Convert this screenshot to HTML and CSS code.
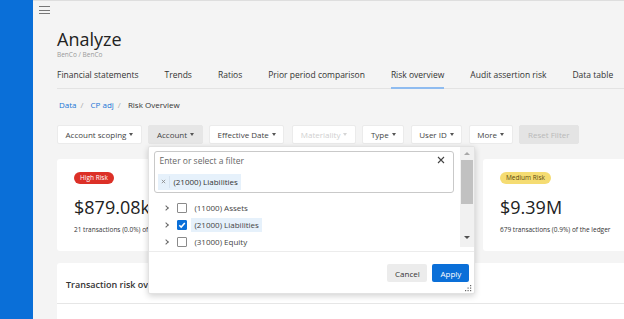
FILE: index.html
```html
<!DOCTYPE html>
<html lang="en">
<head>
    <meta charset="UTF-8">
    <meta name="viewport" content="width=device-width, initial-scale=1.0">
    <title>Analyze - Risk overview</title>
    <link rel="stylesheet" href="styles.css">
</head>
<body>

    <!-- App side rail -->
    <aside class="sidebar"></aside>

    <div class="main">
        <div class="topbar">
            <span class="hamburger"><i></i><i></i><i></i></span>
        </div>

        <div class="content">
            <h1 class="page-title">Analyze</h1>
            <div class="page-sub">BenCo / BenCo</div>

            <!-- Tabs -->
            <nav class="tabs">
                <a class="tab">Financial statements</a>
                <a class="tab">Trends</a>
                <a class="tab">Ratios</a>
                <a class="tab">Prior period comparison</a>
                <a class="tab active">Risk overview</a>
                <a class="tab">Audit assertion risk</a>
                <a class="tab">Data table</a>
            </nav>

            <div class="crumbs">
                <a class="crumb-link">Data</a><span class="crumb-sep">/</span>
                <a class="crumb-link">CP adj</a><span class="crumb-sep">/</span>
                <span class="crumb-current">Risk Overview</span>
            </div>

            <!-- Filter bar -->
            <div class="filters">
                <button class="filter">Account scoping <span class="caret"></span></button>
                <div class="filter-wrap">
                    <button class="filter open">Account <span class="caret"></span></button>

                    <!-- Account dropdown -->
                    <div class="dropdown">
                        <div class="dd-body">
                            <div class="dd-scroll">
                                <div class="dd-input">
                                    <div class="dd-input-row">
                                        <span class="dd-placeholder">Enter or select a filter</span>
                                        <svg class="dd-clear" viewBox="0 0 8 8" width="8" height="8"><path d="M1 1 L7 7 M7 1 L1 7" stroke="#444" stroke-width="1.1"/></svg>
                                    </div>
                                    <span class="chip">
                                        <span class="chip-x"><svg viewBox="0 0 6 6" width="5" height="5"><path d="M1 1 L5 5 M5 1 L1 5" stroke="#888" stroke-width="1"/></svg></span>
                                        <span class="chip-label">(21000) Liabilities</span>
                                    </span>
                                </div>
                                <ul class="tree">
                                    <li class="tree-row">
                                        <span class="chevron"></span>
                                        <span class="check"></span>
                                        <span class="tree-label">(11000) Assets</span>
                                    </li>
                                    <li class="tree-row">
                                        <span class="chevron"></span>
                                        <span class="check checked">
                                            <svg viewBox="0 0 10 10" width="10" height="10"><path d="M2.3 5.2 L4.2 7.1 L7.8 2.9" fill="none" stroke="#fff" stroke-width="1.5"/></svg>
                                        </span>
                                        <span class="tree-label selected">(21000) Liabilities</span>
                                    </li>
                                    <li class="tree-row">
                                        <span class="chevron"></span>
                                        <span class="check"></span>
                                        <span class="tree-label">(31000) Equity</span>
                                    </li>
                                </ul>
                            </div>
                            <div class="scrollbar">
                                <span class="sb-up"></span>
                                <span class="sb-thumb"></span>
                                <span class="sb-down"></span>
                            </div>
                        </div>
                        <div class="dd-footer">
                            <button class="btn btn-cancel">Cancel</button>
                            <button class="btn btn-apply">Apply</button>
                            <svg class="grip" viewBox="0 0 9 9" width="9" height="9">
                                <rect x="7" y="1" width="1.2" height="1.2"/>
                                <rect x="4.5" y="3.5" width="1.2" height="1.2"/>
                                <rect x="7" y="3.5" width="1.2" height="1.2"/>
                                <rect x="2" y="6" width="1.2" height="1.2"/>
                                <rect x="4.5" y="6" width="1.2" height="1.2"/>
                                <rect x="7" y="6" width="1.2" height="1.2"/>
                            </svg>
                        </div>
                    </div>
                </div>
                <button class="filter">Effective Date <span class="caret"></span></button>
                <button class="filter disabled">Materiality <span class="caret"></span></button>
                <button class="filter">Type <span class="caret"></span></button>
                <button class="filter">User ID <span class="caret"></span></button>
                <button class="filter">More <span class="caret"></span></button>
                <button class="filter reset">Reset Filter</button>
            </div>

            <!-- Risk summary cards -->
            <div class="cards">
                <div class="card">
                    <span class="badge badge-high">High Risk</span>
                    <div class="amount">$879.08k</div>
                    <div class="amount-note">21 transactions (0.0%) of the ledger</div>
                </div>
                <div class="card">
                    <span class="badge badge-medium">Medium Risk</span>
                    <div class="amount">$1.02M</div>
                    <div class="amount-note">54 transactions (0.1%) of the ledger</div>
                </div>
                <div class="card">
                    <span class="badge badge-medium">Medium Risk</span>
                    <div class="amount">$9.39M</div>
                    <div class="amount-note">679 transactions (0.9%) of the ledger</div>
                </div>
            </div>

            <div class="panel">
                <div class="panel-head">Transaction risk overview</div>
            </div>
        </div>
    </div>

</body>
</html>
```

FILE: styles.css
```css
/* General */
* {
    box-sizing: border-box;
}

body {
    margin: 0;
    display: flex;
    height: 100vh;
    overflow: hidden;
    background: #f4f4f4;
    font-family: 'Open Sans', 'Noto Sans', sans-serif;
    color: #333;
}

button {
    font-family: inherit;
}

.sidebar {
    width: 33px;
    flex-shrink: 0;
    background: #0a6fd8;
}

.main {
    flex: 1;
    min-width: 0;
    overflow: hidden;
    border-top: 1px solid #dedede;
}

/* Top bar */
.topbar {
    height: 20px;
    padding: 5px 0 0 6px;
}

.hamburger {
    display: flex;
    flex-direction: column;
    gap: 2.5px;
    width: 11px;
}

.hamburger i {
    display: block;
    height: 1px;
    background: #777;
}

/* Page header */
.content {
    padding-left: 24px;
}

.page-title {
    margin: 8px 0 0;
    font-size: 18px;
    font-weight: 500;
    line-height: 20px;
    color: #222;
}

.page-sub {
    margin-top: 1px;
    font-size: 6.5px;
    line-height: 9px;
    color: #999;
}

/* Tabs */
.tabs {
    display: flex;
    gap: 26px;
    margin-top: 10px;
    border-bottom: 1px solid #e3e3e3;
}

.tab {
    font-size: 8.5px;
    line-height: 12px;
    padding-bottom: 6px;
    color: #333;
    margin-bottom: -1px;
    border-bottom: 2px solid transparent;
}

.tab.active {
    border-bottom-color: #8fbcf0;
}

/* Breadcrumb */
.crumbs {
    margin-top: 10px;
    padding-left: 2px;
    font-size: 8px;
    line-height: 11px;
}

.crumb-link {
    color: #1a74d6;
}

.crumb-sep {
    color: #aaa;
    margin: 0 5px 0 4px;
}

.crumb-current {
    color: #333;
}

/* Filter bar */
.filters {
    display: flex;
    gap: 6.5px;
    margin-top: 15px;
}

.filter {
    height: 19px;
    padding: 0 7.5px;
    font-size: 8px;
    color: #444;
    background: #fff;
    border: 1px solid #ebebeb;
    border-radius: 2px;
    display: flex;
    align-items: center;
    gap: 3px;
    white-space: nowrap;
}

.filter.open {
    background: #e6e6e6;
    border-color: #e6e6e6;
}

.filter.disabled {
    color: #cfcfcf;
    margin-left: 1.5px;
}

.filter.disabled .caret {
    border-top-color: #d5d5d5;
}

.filter.reset {
    background: #e4e4e4;
    border-color: #e4e4e4;
    color: #b9b9b9;
    padding: 0 8px;
}

.caret {
    width: 0;
    height: 0;
    border-left: 2.5px solid transparent;
    border-right: 2.5px solid transparent;
    border-top: 3px solid #555;
}

.filter-wrap {
    position: relative;
}

/* Dropdown */
.dropdown {
    position: absolute;
    top: 21px;
    left: 0;
    width: 327px;
    z-index: 5;
    background: #fff;
    border: 1px solid #e2e2e2;
    border-radius: 2px;
    box-shadow: 0 2px 6px rgba(0, 0, 0, 0.18);
}

.dd-body {
    display: flex;
    height: 104px;
    overflow: hidden;
}

.dd-scroll {
    flex: 1;
    padding: 4px 6px 0 5px;
}

.dd-input {
    height: 42px;
    border: 1px solid #c9c9c9;
    border-radius: 3px;
    padding: 1px 4px 0 3px;
}

.dd-input-row {
    display: flex;
    justify-content: space-between;
    align-items: center;
    padding-left: 1px;
    height: 14px;
}

.dd-placeholder {
    font-size: 8.5px;
    color: #666;
}

.dd-clear {
    margin-right: 4px;
}

.chip {
    display: inline-flex;
    align-items: center;
    height: 16px;
    margin-top: 5px;
    background: #e6f1fb;
    font-size: 8px;
    color: #333;
}

.chip-x {
    display: flex;
    align-items: center;
    height: 12px;
    padding: 0 3px;
    border-right: 1px solid #d6e3f0;
}

.chip-label {
    padding: 0 3px 0 3px;
}

.tree {
    list-style: none;
    margin: 6px 0 0;
    padding: 0 0 0 9px;
}

.tree-row {
    height: 17px;
    display: flex;
    align-items: center;
    font-size: 8px;
    color: #444;
}

.chevron {
    width: 4px;
    height: 4px;
    border-right: 1px solid #666;
    border-bottom: 1px solid #666;
    transform: rotate(-45deg);
    margin: 0 9px 0 1px;
}

.check {
    width: 10px;
    height: 10px;
    border: 1px solid #8a8a8a;
    border-radius: 1px;
    background: #fff;
    display: flex;
}

.check.checked {
    background: #0a6fd8;
    border-color: #0a6fd8;
}

.check svg {
    margin: -1px;
}

.tree-label {
    margin-left: 4px;
    padding: 0 3px;
    line-height: 14px;
}

.tree-label.selected {
    background: #e6f1fb;
}

/* Fake scrollbar */
.scrollbar {
    width: 14px;
    height: 100px;
    background: #f1f1f1;
    position: relative;
}

.sb-up,
.sb-down {
    position: absolute;
    left: 4px;
    width: 0;
    height: 0;
    border-left: 3px solid transparent;
    border-right: 3px solid transparent;
}

.sb-up {
    top: 5px;
    border-bottom: 3px solid #a8a8a8;
}

.sb-down {
    bottom: 8px;
    border-top: 3px solid #505050;
}

.sb-thumb {
    position: absolute;
    left: 1px;
    right: 1px;
    top: 13px;
    height: 44px;
    background: #c1c1c1;
}

.dd-footer {
    position: relative;
    height: 42px;
    border-top: 1px solid #ececec;
    display: flex;
    justify-content: flex-end;
    align-items: flex-start;
    gap: 5px;
    padding: 12px 5px 0 0;
}

.btn {
    height: 18px;
    font-size: 8px;
    border: none;
    border-radius: 2px;
    padding: 0;
}

.btn-cancel {
    width: 40px;
    background: #ececec;
    color: #333;
}

.btn-apply {
    width: 37px;
    background: #0a6fd8;
    color: #fff;
}

.grip {
    position: absolute;
    right: 2px;
    bottom: 0;
    fill: #666;
}

/* Cards */
.cards {
    display: grid;
    grid-template-columns: 205px 205px 205px;
    gap: 8px;
    margin-top: 15px;
}

.card {
    height: 92px;
    background: #fff;
    border-radius: 3px;
    padding: 13px 17px 0;
}

.badge {
    display: block;
    width: fit-content;
    height: 12px;
    line-height: 12px;
    padding: 0 6px;
    border-radius: 6px;
    font-size: 6.5px;
}

.badge-high {
    background: #dc3027;
    color: #fff;
}

.badge-medium {
    background: #f5dc72;
    color: #5b4b10;
}

.amount {
    margin-top: 13px;
    font-size: 18px;
    line-height: 20px;
    color: #222;
}

.amount-note {
    margin-top: 8px;
    font-size: 6.5px;
    line-height: 9px;
    color: #333;
}

.panel {
    margin-top: 12px;
    height: 56px;
    background: #fff;
    border-radius: 3px 0 0 0;
}

.panel-head {
    height: 41px;
    padding: 15px 0 0 9px;
    font-size: 9px;
    font-weight: 600;
    color: #333;
    border-bottom: 1px solid #e6e6e6;
}
```
